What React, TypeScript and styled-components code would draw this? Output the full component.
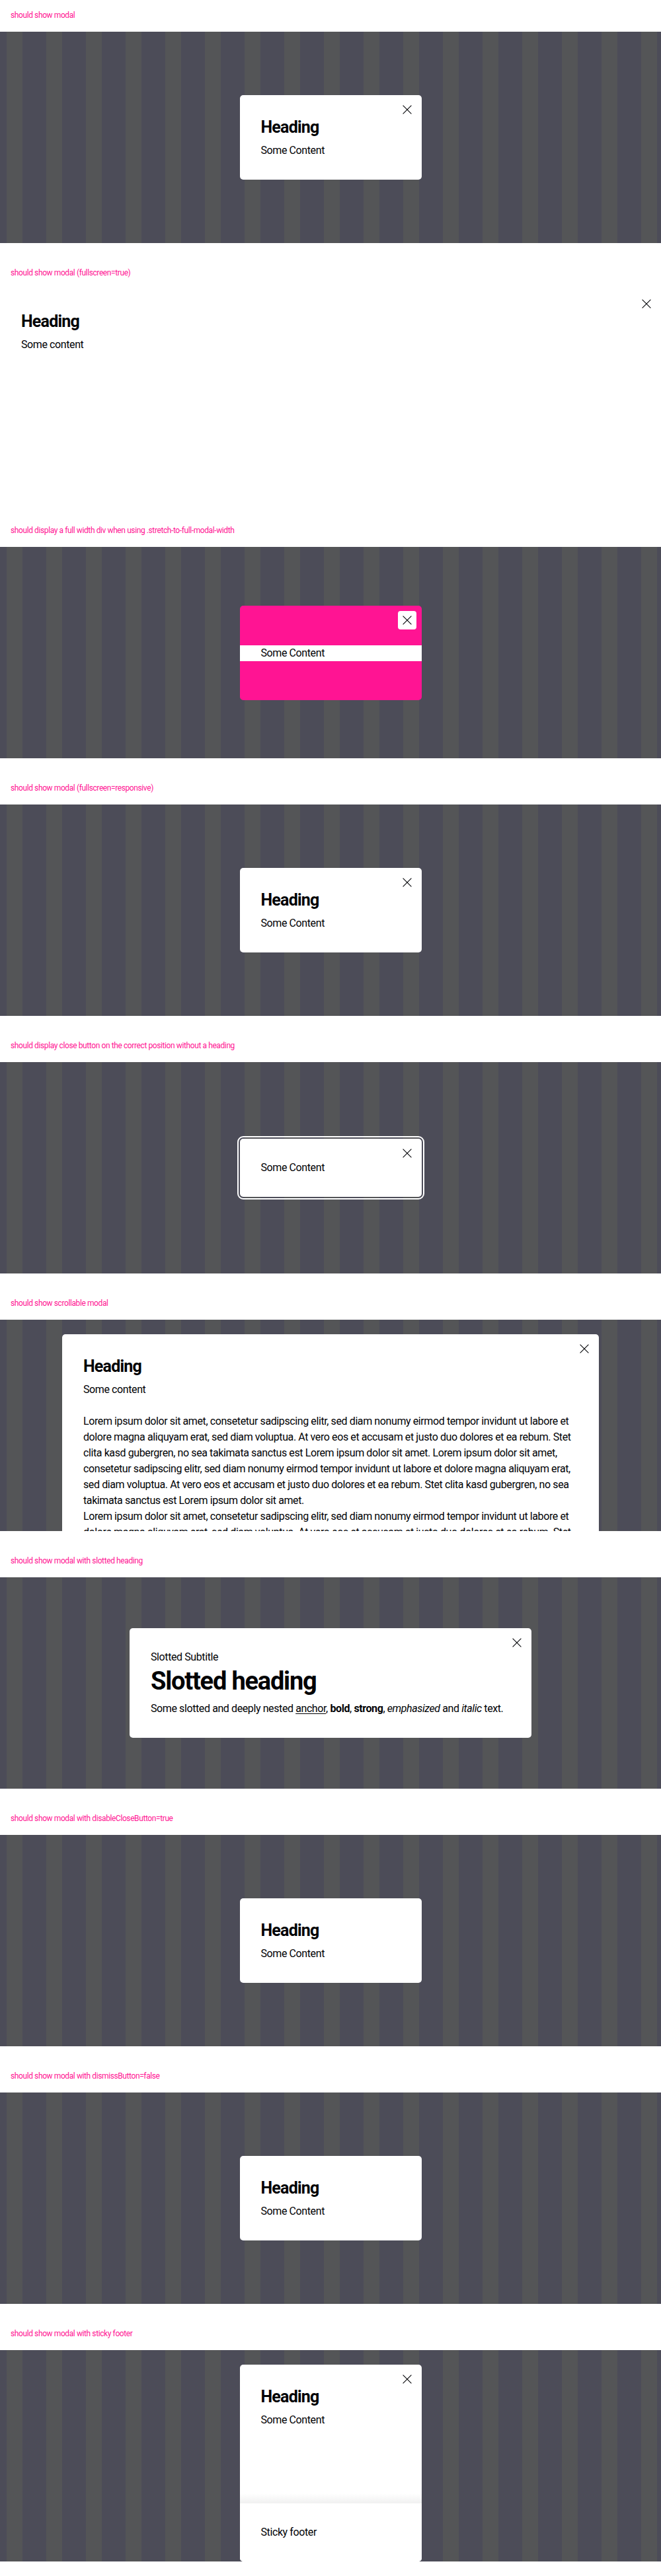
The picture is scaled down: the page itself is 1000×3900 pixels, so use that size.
import React from 'react';
import styled, { createGlobalStyle, css } from 'styled-components';

const GlobalStyle = createGlobalStyle`
  html, body { margin: 0; padding: 0; background: #fff; }
  body {
    font-family: Roboto, "Liberation Sans", Arial, sans-serif;
    color: #010205;
    -webkit-font-smoothing: antialiased;
  }
`;

const Page = styled.main`
  display: flex;
  flex-direction: column;
`;

const Section = styled.section`
  display: flex;
  flex-direction: column;
  padding-bottom: 22px;
`;

const Label = styled.p`
  margin: 0;
  padding: 16px 16px 18px;
  font-size: 12px;
  line-height: 14px;
  letter-spacing: -0.4px;
  color: #ff1493;
`;

const Stage = styled.div<{ $fullscreen?: boolean }>`
  height: 320px;
  box-sizing: border-box;
  overflow: hidden;
  display: flex;
  flex-direction: column;
  align-items: center;
  padding: ${(p) => (p.$fullscreen ? '0' : '22px 0')};
  background: repeating-linear-gradient(
    90deg,
    #4c4c58 0px,
    #4c4c58 10px,
    #545557 10px,
    #545557 34px,
    #4c4c58 34px,
    #4c4c58 60px
  );
`;

type ModalProps = {
  $width?: number;
  $height?: number;
  $fullscreen?: boolean;
  $pink?: boolean;
  $focused?: boolean;
  $flush?: boolean;
};

const Modal = styled.div<ModalProps>`
  position: relative;
  box-sizing: border-box;
  flex-shrink: 0;
  margin: auto 0;
  display: flex;
  flex-direction: column;
  width: ${(p) => (p.$fullscreen ? '100%' : `${p.$width ?? 275}px`)};
  border-radius: ${(p) => (p.$fullscreen ? '0' : '5px')};
  background: ${(p) => (p.$pink ? '#ff1493' : '#fff')};
  padding: ${(p) => (p.$pink ? '60px 0 59px' : p.$flush ? '0' : '32px')};
  ${(p) => p.$fullscreen && css`height: 100%;`}
  ${(p) => p.$height && css`height: ${p.$height}px; overflow: hidden;`}
  ${(p) =>
    p.$focused &&
    css`
      outline: 2px solid #fff;
      outline-offset: 2px;
    `}
`;

const CloseButton = styled.button`
  position: absolute;
  top: 8px;
  right: 8px;
  width: 28px;
  height: 28px;
  padding: 0;
  border: 0;
  border-radius: 4px;
  background: #fff;
  color: #010205;
  display: flex;
  align-items: center;
  justify-content: center;
  cursor: pointer;
`;

const Heading = styled.h2`
  margin: 0 0 6px;
  font-size: 25px;
  line-height: 34px;
  font-weight: 700;
  letter-spacing: -0.8px;
`;

const Text = styled.p`
  margin: 0;
  font-size: 16px;
  line-height: 24px;
  letter-spacing: -0.4px;
`;

const StretchRow = styled.div`
  background: #fff;
  padding: 0 32px;
`;

const SlottedHeading = styled.h2`
  margin: 0 0 6px;
  font-size: 38px;
  line-height: 48px;
  font-weight: 700;
  letter-spacing: -1.2px;
`;

const RichText = styled(Text)`
  a {
    color: inherit;
    text-decoration: underline;
    text-underline-offset: 2px;
  }
  b,
  strong {
    font-weight: 700;
  }
`;

const LoremBlock = styled.div`
  margin-top: 24px;
  font-size: 16px;
  line-height: 24px;
  letter-spacing: -0.4px;
`;

const LoremLine = styled.span`
  display: block;
  white-space: nowrap;
`;

const StickyBody = styled.div`
  flex: 1;
  padding: 32px 32px 0;
`;

const StickyFooter = styled.div`
  position: relative;
  padding: 32px;
  background: #fff;
  &::before {
    content: '';
    position: absolute;
    left: 0;
    right: 0;
    top: -15px;
    height: 15px;
    background: linear-gradient(to bottom, rgba(255, 255, 255, 0), rgba(1, 2, 5, 0.06));
  }
`;

const CloseIcon = () => (
  <svg width="14" height="14" viewBox="0 0 14 14" aria-hidden="true">
    <path d="M0.6 0.6 L13.4 13.4 M13.4 0.6 L0.6 13.4" stroke="currentColor" strokeWidth="1.1" fill="none" />
  </svg>
);

const Close = () => (
  <CloseButton type="button" aria-label="Close">
    <CloseIcon />
  </CloseButton>
);

const lorem = [
  'Lorem ipsum dolor sit amet, consetetur sadipscing elitr, sed diam nonumy eirmod tempor invidunt ut labore et',
  'dolore magna aliquyam erat, sed diam voluptua. At vero eos et accusam et justo duo dolores et ea rebum. Stet',
  'clita kasd gubergren, no sea takimata sanctus est Lorem ipsum dolor sit amet. Lorem ipsum dolor sit amet,',
  'consetetur sadipscing elitr, sed diam nonumy eirmod tempor invidunt ut labore et dolore magna aliquyam erat,',
  'sed diam voluptua. At vero eos et accusam et justo duo dolores et ea rebum. Stet clita kasd gubergren, no sea',
  'takimata sanctus est Lorem ipsum dolor sit amet.',
  'Lorem ipsum dolor sit amet, consetetur sadipscing elitr, sed diam nonumy eirmod tempor invidunt ut labore et',
  'dolore magna aliquyam erat, sed diam voluptua. At vero eos et accusam et justo duo dolores et ea rebum. Stet',
];

const Demo = ({ label, fullscreen, children }: { label: string; fullscreen?: boolean; children: React.ReactNode }) => (
  <Section>
    <Label>{label}</Label>
    <Stage $fullscreen={fullscreen}>{children}</Stage>
  </Section>
);

export default function App() {
  return (
    <>
      <GlobalStyle />
      <Page>
        <Demo label="should show modal">
          <Modal>
            <Close />
            <Heading>Heading</Heading>
            <Text>Some Content</Text>
          </Modal>
        </Demo>

        <Demo label="should show modal (fullscreen=true)" fullscreen>
          <Modal $fullscreen>
            <Close />
            <Heading>Heading</Heading>
            <Text>Some content</Text>
          </Modal>
        </Demo>

        <Demo label="should display a full width div when using .stretch-to-full-modal-width">
          <Modal $pink>
            <Close />
            <StretchRow>
              <Text>Some Content</Text>
            </StretchRow>
          </Modal>
        </Demo>

        <Demo label="should show modal (fullscreen=responsive)">
          <Modal>
            <Close />
            <Heading>Heading</Heading>
            <Text>Some Content</Text>
          </Modal>
        </Demo>

        <Demo label="should display close button on the correct position without a heading">
          <Modal $focused>
            <Close />
            <Text>Some Content</Text>
          </Modal>
        </Demo>

        <Demo label="should show scrollable modal">
          <Modal $width={812}>
            <Close />
            <Heading>Heading</Heading>
            <Text>Some content</Text>
            <LoremBlock>
              {lorem.map((line, i) => (
                <LoremLine key={i}>{line}</LoremLine>
              ))}
            </LoremBlock>
          </Modal>
        </Demo>

        <Demo label="should show modal with slotted heading">
          <Modal $width={608}>
            <Close />
            <Text>Slotted Subtitle</Text>
            <SlottedHeading>Slotted heading</SlottedHeading>
            <RichText>
              Some slotted and deeply nested <a href="#">anchor</a>, <b>bold</b>, <strong>strong</strong>,{' '}
              <em>emphasized</em> and <i>italic</i> text.
            </RichText>
          </Modal>
        </Demo>

        <Demo label="should show modal with disableCloseButton=true">
          <Modal>
            <Heading>Heading</Heading>
            <Text>Some Content</Text>
          </Modal>
        </Demo>

        <Demo label="should show modal with dismissButton=false">
          <Modal>
            <Heading>Heading</Heading>
            <Text>Some Content</Text>
          </Modal>
        </Demo>

        <Demo label="should show modal with sticky footer">
          <Modal $flush $height={298}>
            <Close />
            <StickyBody>
              <Heading>Heading</Heading>
              <Text>Some Content</Text>
            </StickyBody>
            <StickyFooter>
              <Text>Sticky footer</Text>
            </StickyFooter>
          </Modal>
        </Demo>
      </Page>
    </>
  );
}
